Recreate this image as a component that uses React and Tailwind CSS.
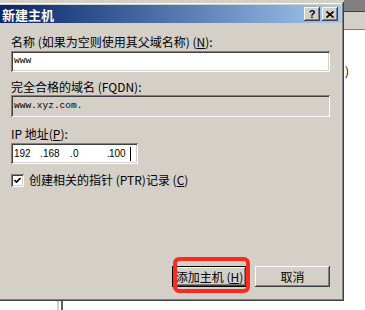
import React from 'react';

const cjk = "font-['SimSun','Noto_Sans_CJK_SC',sans-serif]";
const raised = 'shadow-[inset_-1px_-1px_#404040,inset_1px_1px_#ffffff,inset_-2px_-2px_#808080,inset_2px_2px_#d4d0c8]';
const sunken = 'shadow-[inset_1px_1px_#808080,inset_-1px_-1px_#ffffff,inset_2px_2px_#404040,inset_-2px_-2px_#d4d0c8]';

function U({ children }) {
  return <span className="underline underline-offset-[1px]">{children}</span>;
}

function TitleButton({ children }) {
  return (
    <div className={`w-[16px] h-[14px] bg-[#d4d0c8] flex items-center justify-center ${raised}`}>
      {children}
    </div>
  );
}

function Button({ children, isDefault }) {
  return (
    <div
      className={`w-[75px] h-[21px] bg-[#d4d0c8] flex items-center justify-center text-[12px] text-black ${cjk} ${
        isDefault
          ? 'shadow-[inset_0_0_0_1px_#000000,inset_-2px_-2px_#404040,inset_2px_2px_#ffffff,inset_-3px_-3px_#808080]'
          : raised
      }`}
    >
      {children}
    </div>
  );
}

export default function App() {
  return (
    <div className="relative w-[365px] h-[310px] overflow-hidden bg-white">
      {/* windows behind the dialog */}
      <div className="absolute left-0 top-0 w-[365px] h-[4px] bg-[#d4d0c8]"></div>
      <div className="absolute left-[344px] top-0 w-[21px] h-[11px] bg-[#808080]"></div>
      <div className="absolute left-[344px] top-[11px] w-[21px] h-[19px] bg-[#d4d0c8] border-t border-t-[#404040] border-b border-b-[#808080]"></div>
      <div className={`absolute left-[345px] top-[64px] text-[12px] leading-[14px] ${cjk}`}>)</div>
      <div className="absolute left-[57px] top-[300px] w-[6px] h-[10px] flex">
        <div className="w-[2px] bg-[#d4d0c8]"></div>
        <div className="w-[2px] bg-white"></div>
        <div className="w-[2px] bg-[#606060]"></div>
      </div>

      {/* dialog */}
      <div
        className={`absolute left-[-3px] top-[2px] w-[347px] h-[299px] bg-[#d4d0c8] p-[3px] flex flex-col shadow-[inset_-1px_-1px_#404040,inset_1px_1px_#d4d0c8,inset_-2px_-2px_#808080,inset_2px_2px_#ffffff]`}
      >
        <div className="h-[18px] flex items-center justify-between bg-gradient-to-r from-[#0a246a] to-[#a6caf0] pl-[2px] pr-[3px]">
          <span className={`text-white font-bold text-[13px] leading-[13px] ${cjk}`}>新建主机</span>
          <div className="flex gap-[2px]">
            <TitleButton>
              <span className="font-['Liberation_Sans',sans-serif] font-bold text-[11px] leading-[11px] text-black">?</span>
            </TitleButton>
            <TitleButton>
              <svg width="8" height="7" viewBox="0 0 8 7">
                <path d="M0.5 0.5 L7.5 6.5 M7.5 0.5 L0.5 6.5" stroke="#000" strokeWidth="1.6" />
              </svg>
            </TitleButton>
          </div>
        </div>

        <div className={`flex-1 flex flex-col pl-[11px] pr-[11px] text-[12px] text-black ${cjk}`}>
          <div className="mt-[12px] h-[14px] leading-[14px]">
            名称 (如果为空则使用其父域名称) (<U>N</U>):
          </div>
          <div className={`mt-[2px] h-[21px] bg-white flex items-center pl-[3px] ${sunken}`}>
            <span className="font-['Liberation_Mono',monospace] text-[9.5px]">www</span>
          </div>

          <div className="mt-[8px] h-[14px] leading-[14px]">完全合格的域名 (FQDN):</div>
          <div className={`mt-[1px] h-[22px] bg-[#d4d0c8] flex items-center pl-[3px] ${sunken}`}>
            <span className="font-['Liberation_Mono',monospace] text-[9.5px]">www.xyz.com.</span>
          </div>

          <div className="mt-[10px] h-[14px] leading-[14px]">IP 地址(<U>P</U>):</div>
          <div
            className={`mt-[2px] w-[127px] h-[21px] bg-white flex items-center pl-[3px] font-['Liberation_Sans',sans-serif] text-[10px] ${sunken}`}
          >
            <span className="w-[26px]">192</span>
            <span className="w-[3px]">.</span>
            <span className="w-[27px]">168</span>
            <span className="w-[3px]">.</span>
            <span className="w-[34px]">0</span>
            <span className="w-[2px]">.</span>
            <span>100</span>
            <span className="ml-[4px] w-[1px] h-[14px] bg-black"></span>
          </div>

          <div className="mt-[9px] flex items-center gap-[5px]">
            <div className={`w-[13px] h-[13px] bg-white flex items-center justify-center ${sunken}`}>
              <svg width="7" height="7" viewBox="0 0 7 7">
                <path d="M0.5 3 L2.5 5 L6.5 1" stroke="#000" strokeWidth="1.7" fill="none" />
              </svg>
            </div>
            <span className="leading-[14px]">创建相关的指针 (PTR)记录 (<U>C</U>)</span>
          </div>

          <div className="mt-auto mb-[11px] flex justify-end gap-[8px]">
            <Button isDefault>
              添加主机 (<U>H</U>)
            </Button>
            <Button>取消</Button>
          </div>
        </div>
      </div>

      {/* red highlight */}
      <div className="absolute left-[173px] top-[257px] w-[77px] h-[36px] border-[4px] border-[#ff2a1f] rounded-[6px]"></div>
    </div>
  );
}
